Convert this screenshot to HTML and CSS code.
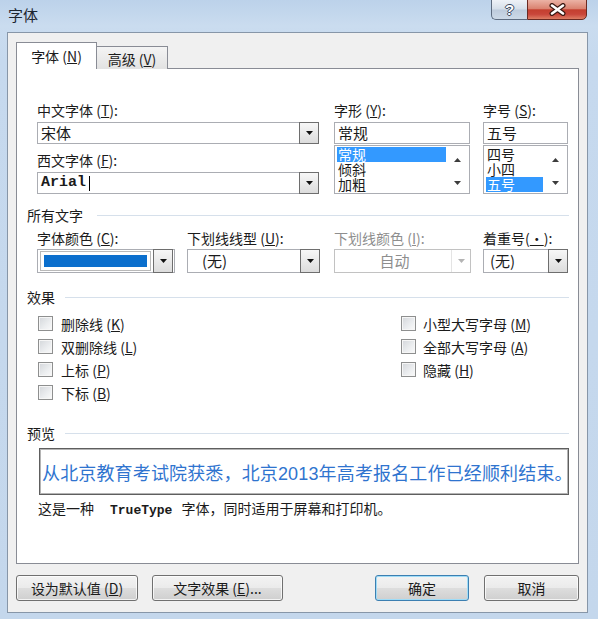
FILE: index.html
```html
<!DOCTYPE html>
<html lang="zh-CN">
<head>
<meta charset="utf-8">
<title>字体</title>
<link rel="stylesheet" href="styles.css">
</head>
<body>
<div class="window">
  <div class="titlebar">
    <div class="title">字体</div>
    <div class="caption-btns">
      <div class="cap-help">?</div>
      <div class="cap-close">
        <svg width="17" height="13" viewBox="0 0 17 13"><path d="M3 2.5L14 10.5M14 2.5L3 10.5" stroke="#3a1812" stroke-width="5" stroke-linecap="round"/><path d="M3 2.5L14 10.5M14 2.5L3 10.5" stroke="#fff" stroke-width="2.6" stroke-linecap="round"/></svg>
      </div>
    </div>
  </div>

  <div class="client">
    <div class="tabs">
      <div class="tab active"><span>字体 (<u>N</u>)</span></div>
      <div class="tab inactive"><span>高级 (<u>V</u>)</span></div>
    </div>

    <div class="panel">
      <div class="top-row">
        <div class="col-font">
          <div class="lbl">中文字体 (<u>T</u>):</div>
          <div class="combo">
            <span class="val">宋体</span>
            <span class="dd"><svg width="7" height="4" viewBox="0 0 7 4"><path d="M0 0H7L3.5 4Z" fill="#111"/></svg></span>
          </div>
          <div class="lbl lbl-second">西文字体 (<u>F</u>):</div>
          <div class="combo">
            <span class="val mono">Arial<i class="caret"></i></span>
            <span class="dd"><svg width="7" height="4" viewBox="0 0 7 4"><path d="M0 0H7L3.5 4Z" fill="#111"/></svg></span>
          </div>
        </div>

        <div class="col-style">
          <div class="lbl">字形 (<u>Y</u>):</div>
          <div class="edit">常规</div>
          <div class="list">
            <div class="items">
              <div class="item sel">常规</div>
              <div class="item">倾斜</div>
              <div class="item">加粗</div>
            </div>
            <div class="sbar">
              <svg width="7" height="4" viewBox="0 0 7 4"><path d="M0 4L3.5 0L7 4Z" fill="#3c3c3c"/></svg>
              <svg width="7" height="4" viewBox="0 0 7 4"><path d="M0 0H7L3.5 4Z" fill="#3c3c3c"/></svg>
            </div>
          </div>
        </div>

        <div class="col-size">
          <div class="lbl">字号 (<u>S</u>):</div>
          <div class="edit">五号</div>
          <div class="list">
            <div class="items">
              <div class="item">四号</div>
              <div class="item">小四</div>
              <div class="item sel">五号</div>
            </div>
            <div class="sbar">
              <svg width="7" height="4" viewBox="0 0 7 4"><path d="M0 4L3.5 0L7 4Z" fill="#3c3c3c"/></svg>
              <svg width="7" height="4" viewBox="0 0 7 4"><path d="M0 0H7L3.5 4Z" fill="#3c3c3c"/></svg>
            </div>
          </div>
        </div>
      </div>

      <div class="section sec-all"><span>所有文字</span><span class="line"></span></div>

      <div class="attrs">
        <div class="a-color">
          <div class="lbl">字体颜色 (<u>C</u>):</div>
          <div class="combo tall color">
            <span class="swatch-frame"><span class="swatch"></span></span>
            <span class="dd"><svg width="7" height="4" viewBox="0 0 7 4"><path d="M0 0H7L3.5 4Z" fill="#111"/></svg></span>
          </div>
        </div>
        <div class="a-uline">
          <div class="lbl">下划线线型 (<u>U</u>):</div>
          <div class="combo tall">
            <span class="val pad-none">(无)</span>
            <span class="dd"><svg width="7" height="4" viewBox="0 0 7 4"><path d="M0 0H7L3.5 4Z" fill="#111"/></svg></span>
          </div>
        </div>
        <div class="a-ucolor">
          <div class="lbl disabled">下划线颜色 (<u>I</u>):</div>
          <div class="combo tall off">
            <span class="val center">自动</span>
            <span class="dd off"><svg width="7" height="4" viewBox="0 0 7 4"><path d="M0 0H7L3.5 4Z" fill="#b4b4b4"/></svg></span>
          </div>
        </div>
        <div class="a-emph">
          <div class="lbl">着重号(<u>·</u>):</div>
          <div class="combo tall">
            <span class="val pad-emph">(无)</span>
            <span class="dd"><svg width="7" height="4" viewBox="0 0 7 4"><path d="M0 0H7L3.5 4Z" fill="#111"/></svg></span>
          </div>
        </div>
      </div>

      <div class="section sec-fx"><span>效果</span><span class="line"></span></div>

      <div class="effects">
        <div class="fx-left">
          <div class="check"><span class="box"></span><span>删除线 (<u>K</u>)</span></div>
          <div class="check"><span class="box"></span><span>双删除线 (<u>L</u>)</span></div>
          <div class="check"><span class="box"></span><span>上标 (<u>P</u>)</span></div>
          <div class="check"><span class="box"></span><span>下标 (<u>B</u>)</span></div>
        </div>
        <div class="fx-right">
          <div class="check"><span class="box"></span><span>小型大写字母 (<u>M</u>)</span></div>
          <div class="check"><span class="box"></span><span>全部大写字母 (<u>A</u>)</span></div>
          <div class="check"><span class="box"></span><span>隐藏 (<u>H</u>)</span></div>
        </div>
      </div>

      <div class="section sec-pv"><span>预览</span><span class="line"></span></div>

      <div class="preview">从北京教育考试院获悉，北京2013年高考报名工作已经顺利结束。</div>

      <div class="desc">这是一种<span class="mono tt">TrueType</span>字体，同时适用于屏幕和打印机。</div>
    </div>

    <div class="buttons">
      <div class="btn b-default"><span>设为默认值 (<u>D</u>)</span></div>
      <div class="btn b-effect"><span>文字效果 (<u>E</u>)...</span></div>
      <div class="btn b-ok">确定</div>
      <div class="btn b-cancel">取消</div>
    </div>
  </div>
</div>
</body>
</html>
```

FILE: styles.css
```css
* { box-sizing: border-box; }
html, body { margin: 0; padding: 0; }
body {
  width: 598px;
  height: 619px;
  overflow: hidden;
  background: linear-gradient(180deg, #bcd2ea 0px, #cadcef 26px, #c6d9ee 60px, #c4d7ec 100%);
  font-family: "Noto Sans CJK SC", "Noto Sans CJK JP", sans-serif;
  font-size: 14px;
  color: #1b1b1b;
}
u { text-decoration: underline; text-underline-offset: 1px; text-decoration-thickness: 1px; }

.window { display: flex; flex-direction: column; height: 619px; }

/* title bar */
.titlebar { flex: none; height: 32px; display: flex; align-items: flex-start; padding-left: 8px; }
.title { margin-top: 6px; font-size: 15px; line-height: 18px; color: #1e2630; }
.caption-btns { margin-left: auto; margin-right: 11px; margin-top: -1px; display: flex; height: 21px; }
.cap-help {
  width: 36px; height: 21px;
  border: 1px solid #5d6c80; border-right: none;
  border-radius: 0 0 0 5px;
  background: linear-gradient(#eef2f7 0%, #d5dfea 48%, #bdcbdc 52%, #ccd9e7 100%);
  display: flex; align-items: center; justify-content: center;
  font: bold 15px "Liberation Sans", sans-serif;
  color: #fff;
  text-shadow: 1px 0 0 #3b4a5f, -1px 0 0 #3b4a5f, 0 1px 0 #3b4a5f, 0 -1px 0 #3b4a5f;
}
.cap-close {
  width: 60px; height: 21px;
  border: 1px solid #6a2a22;
  border-radius: 0 0 5px 0;
  background: linear-gradient(#ebb2a5 0%, #da8371 45%, #c43f2f 52%, #c9463a 75%, #de7d64 100%);
  display: flex; align-items: center; justify-content: center;
}

/* client */
.client {
  flex: none;
  height: 581px;
  margin: 0 10px 0 7px;
  border: 1px solid #8796a8;
  background: #f0f0f0;
  padding: 9px 8px 0 8px;
  display: flex; flex-direction: column;
}

.tabs { flex: none; display: flex; align-items: flex-end; height: 27px; margin-bottom: -1px; position: relative; z-index: 1; }
.tab {
  height: 23px;
  border: 1px solid #898c95; border-bottom: none;
  background: linear-gradient(#f4f4f4, #e2e2e2);
  display: flex; align-items: center; justify-content: center;
  font-size: 14px; line-height: 16px;
}
.tab.active { width: 81px; height: 27px; background: #fff; padding-bottom: 1px; }
.tab.inactive { width: 71px; border-left: none; padding-top: 1px; }

.panel {
  flex: none;
  height: 496px;
  border: 1px solid #898c95;
  background: #fff;
  padding: 33px 9px 0 20px;
}

.lbl { height: 16px; line-height: 16px; font-size: 14px; white-space: nowrap; }
.lbl.disabled { color: #8e8e8e; }
.lbl-second { margin-top: 8px; }

.top-row { display: flex; }
.col-font { width: 282px; }
.col-style { width: 136px; margin-left: 15px; }
.col-size { width: 85px; margin-left: 13px; }

.combo {
  display: flex;
  height: 22px;
  margin-top: 4px;
  border: 1px solid #abadb3;
  background: #fff;
}
.combo .val { flex: 1; padding-left: 3px; line-height: 20px; font-size: 15px; white-space: nowrap; display: flex; align-items: center; }
.dd {
  flex: none;
  width: 20px;
  margin: -1px -1px -1px 0;
  border: 1px solid #6e6e6e;
  background: linear-gradient(#f7f7f7, #dcdcdc);
  display: flex; align-items: center; justify-content: center;
}
.dd.off { border: none; border-left: 1px solid #e4e4e4; background: #fff; margin: 0; width: 19px; }

.mono { font-family: "Liberation Mono", monospace; font-weight: bold; font-size: 13px; }
.caret { display: inline-block; width: 1px; height: 15px; background: #000; margin-left: 3px; }

.edit { height: 22px; margin-top: 4px; border: 1px solid #abadb3; padding-left: 3px; line-height: 20px; font-size: 15px; }
.list { display: flex; height: 49px; margin-top: 1px; border: 1px solid #abadb3; background: #fff; }
.items { flex: 1; padding: 1px 0 0 2px; overflow: hidden; }
.item { height: 15px; line-height: 15px; font-size: 14px; padding-left: 1px; white-space: nowrap; }
.item.sel { background: #3399ff; color: #fff; }
.sbar {
  flex: none; width: 23px;
  display: flex; flex-direction: column; justify-content: space-between; align-items: center;
  padding: 12px 0 8px;
}
.col-size .sbar { width: 24px; }

/* sections */
.section { display: flex; align-items: center; height: 16px; line-height: 16px; margin-left: -10px; font-size: 14px; }
.section .line { flex: 1; height: 1px; background: #d6e0eb; margin-left: 10px; }
.sec-all { margin-top: 13px; }
.sec-all .line { margin-left: 14px; }
.sec-fx { margin-top: 16px; }
.sec-pv { margin-top: 21px; }

.attrs { display: flex; margin-top: 7px; }
.a-color { width: 138px; }
.a-uline { width: 133px; margin-left: 12px; }
.a-ucolor { width: 137px; margin-left: 14px; }
.a-emph { width: 85px; margin-left: 12px; }
.combo.tall { height: 24px; margin-top: 3px; }
.combo.off { border-color: #c2c2c2; }
.combo .val.center { justify-content: center; color: #8e8e8e; }
.combo .val.pad-none { padding-left: 14px; }
.combo .val.pad-emph { padding-left: 6px; }
.combo.color { padding: 0 2px 0 2px; }
.swatch-frame { flex: 1; margin: 1px 2px 1px 0; border: 1px solid #b9b9b9; padding: 3px; display: flex; }
.swatch { flex: 1; background: #0b6fcd; }

/* effects */
.effects { display: flex; margin-top: 7px; }
.fx-left { width: 363px; margin-left: 1px; }
.check { height: 23px; display: flex; align-items: center; gap: 8px; font-size: 14px; white-space: nowrap; }
.fx-right .check { gap: 7px; }
.box {
  flex: none; width: 15px; height: 15px;
  border: 1px solid #8e8f8f;
  background: linear-gradient(135deg, #d3d6da 0%, #eceef0 60%, #fafafa 100%);
  box-shadow: inset 0 0 0 1px #f6f6f6;
}

/* preview */
.preview {
  margin-top: 7px; margin-left: 2px;
  height: 47px;
  border: 1px solid #5e5e5e;
  box-shadow: inset 0 0 0 1px #b4b4b4;
  display: flex; align-items: center;
  padding-left: 2px;
  font-family: "Liberation Sans", "Noto Sans CJK SC", sans-serif;
  font-size: 18px; letter-spacing: 0.15px;
  color: #2f74cf;
  white-space: nowrap;
}
.desc { margin-top: 5px; margin-left: 1px; height: 16px; line-height: 16px; font-size: 14px; white-space: nowrap; }
.desc .tt { margin: 0 9px 0 16px; }

/* buttons */
.buttons { flex: none; display: flex; height: 26px; margin-top: 11px; }
.btn {
  height: 26px;
  border: 1px solid #707070;
  border-radius: 3px;
  background: linear-gradient(#f3f3f3 0%, #ebebeb 48%, #dddddd 52%, #cfcfcf 100%);
  box-shadow: inset 0 0 0 1px rgba(255,255,255,0.75);
  display: flex; align-items: center; justify-content: center;
  font-size: 14px; white-space: nowrap;
}
.b-default { width: 122px; }
.b-effect { width: 131px; margin-left: 14px; }
.b-ok { width: 94px; margin-left: auto; border-color: #3c7fb1; box-shadow: inset 0 0 0 1px #9fdcf7; }
.b-cancel { width: 95px; margin-left: 15px; }
```
